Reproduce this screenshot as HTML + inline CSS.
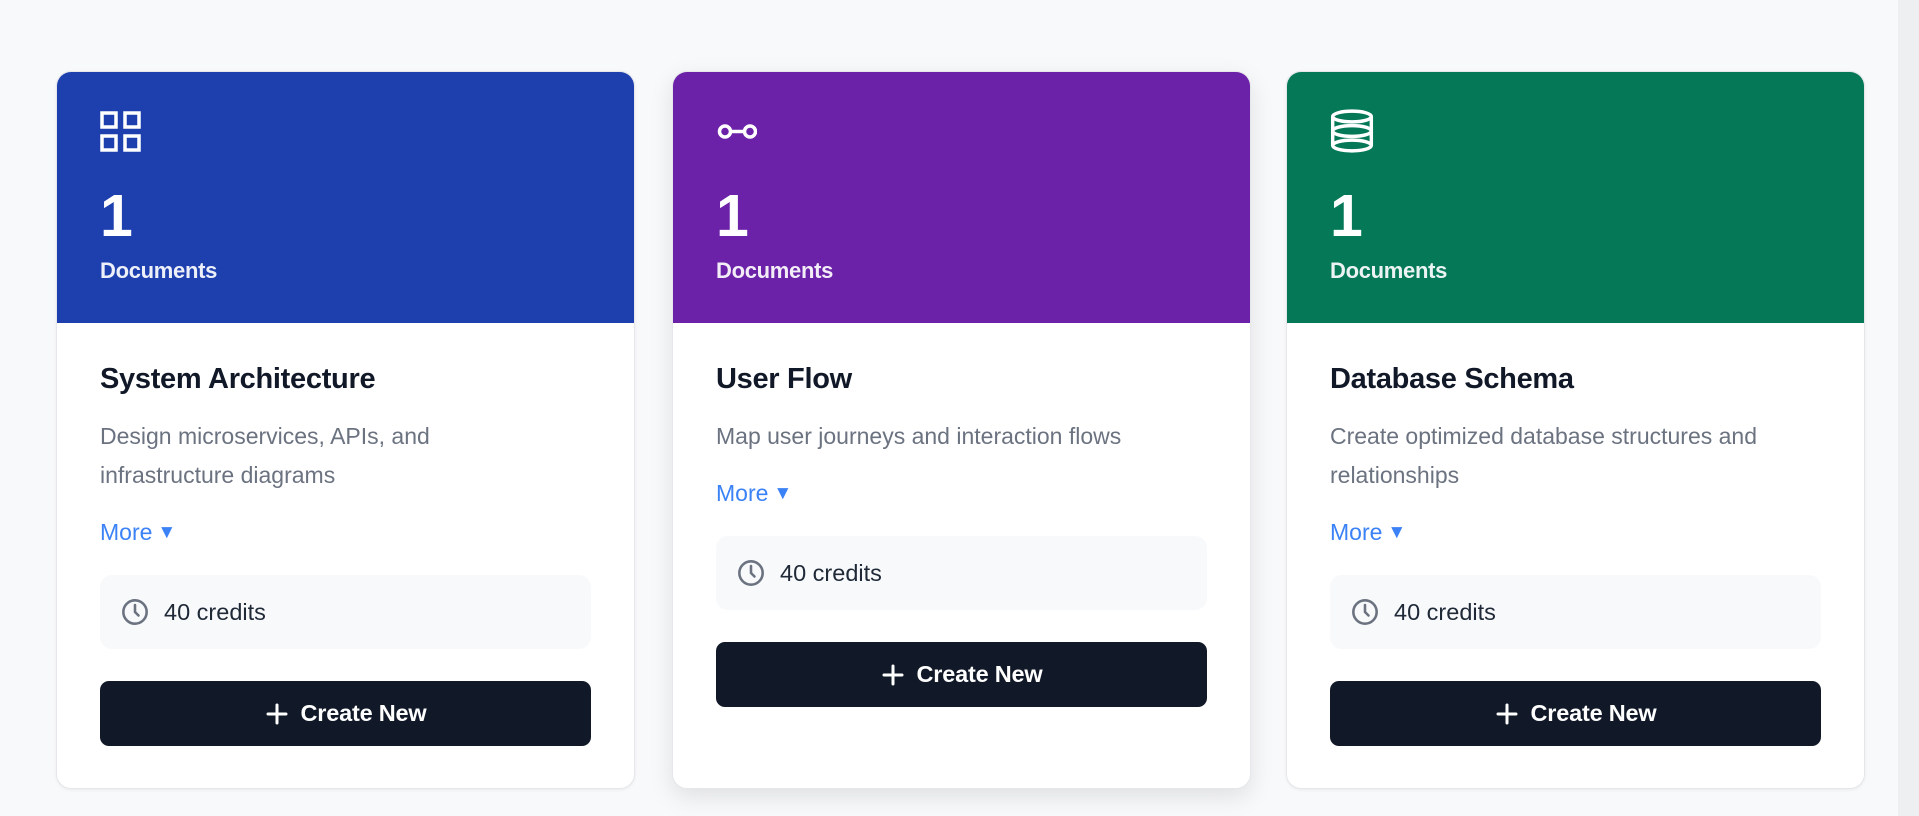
<!DOCTYPE html>
<html><head><meta charset="utf-8"><style>
*{box-sizing:border-box;margin:0;padding:0}
body{width:1919px;height:816px;background:#f8f9fb;font-family:"Liberation Sans",Arial,sans-serif;position:relative;overflow:hidden}
.sb{position:absolute;right:0;top:0;width:21px;height:816px;background:#eeeff1}
.card{position:absolute;top:71px;width:579px;height:718px;background:#fff;border:1px solid #e5e7eb;border-radius:15px;overflow:hidden;box-shadow:0 1px 3px rgba(0,0,0,.06)}
.card.hov{box-shadow:0 8px 24px rgba(0,0,0,.10)}
.hd{height:251px;padding:39px 43px 0;color:#fff}
.hd svg{display:block;width:41px;height:41px}
.num{font-size:59px;font-weight:bold;line-height:59px;margin-top:35px}
.docs{font-size:22px;line-height:30px;margin-top:10px;font-weight:bold;color:rgba(255,255,255,.92);letter-spacing:-.3px}
.bd{padding:38px 43px 0}
h2{font-size:29px;line-height:36px;font-weight:bold;color:#111827;letter-spacing:-.3px}
.desc{font-size:23px;line-height:39px;color:#6b7280;margin-top:20px}
.more{font-size:23px;line-height:34px;color:#3b82f6;margin-top:20px}
.more span{font-size:19px;position:relative;top:-2px;margin-left:5px}
.cred{margin-top:23px;height:74px;background:#f8f9fb;border-radius:12px;display:flex;align-items:center;padding-left:21px;font-size:23.5px;color:#1f2937}
.cred svg{width:28px;height:28px;margin-right:15px}
.btn{margin-top:32px;height:65px;background:#111827;border-radius:9px;color:#fff;display:flex;align-items:center;justify-content:center;font-size:23.5px;font-weight:bold;letter-spacing:-.2px}
.btn svg{width:24px;height:24px;margin-right:12px}
</style></head><body>
<div class="sb"></div>

<div class="card" style="left:56px">
<div class="hd" style="background:#1e40af">
<svg viewBox="0 0 41 41" fill="none" stroke="#fff" stroke-width="3.5"><rect x="2" y="2" width="14" height="14"/><rect x="25" y="2" width="14" height="14"/><rect x="2" y="25" width="14" height="14"/><rect x="25" y="25" width="14" height="14"/></svg>
<div class="num">1</div><div class="docs">Documents</div></div>
<div class="bd"><h2>System Architecture</h2>
<div class="desc">Design microservices, APIs, and<br>infrastructure diagrams</div>
<div class="more">More<span>▼</span></div>
<div class="cred"><svg viewBox="0 0 24 24" fill="none" stroke="#6b7280" stroke-width="2.2" stroke-linecap="round"><circle cx="12" cy="12" r="10"/><path d="M12 6v6l3 3"/></svg>40 credits</div>
<div class="btn"><svg viewBox="0 0 24 24" fill="none" stroke="#fff" stroke-width="3" stroke-linecap="round"><path d="M12 3v18M3 12h18"/></svg>Create New</div>
</div></div>

<div class="card hov" style="left:672px">
<div class="hd" style="background:#6b21a8">
<svg viewBox="0 0 41 41" fill="none" stroke="#fff" stroke-width="3.5"><circle cx="9" cy="20.5" r="5.5"/><circle cx="34" cy="20.5" r="5.5"/><path d="M14.5 20.5h14"/></svg>
<div class="num">1</div><div class="docs">Documents</div></div>
<div class="bd"><h2>User Flow</h2>
<div class="desc">Map user journeys and interaction flows</div>
<div class="more">More<span>▼</span></div>
<div class="cred"><svg viewBox="0 0 24 24" fill="none" stroke="#6b7280" stroke-width="2.2" stroke-linecap="round"><circle cx="12" cy="12" r="10"/><path d="M12 6v6l3 3"/></svg>40 credits</div>
<div class="btn"><svg viewBox="0 0 24 24" fill="none" stroke="#fff" stroke-width="3" stroke-linecap="round"><path d="M12 3v18M3 12h18"/></svg>Create New</div>
</div></div>

<div class="card" style="left:1286px">
<div class="hd" style="background:#047857">
<svg viewBox="0 0 41 41" fill="none" stroke="#fff" stroke-width="3.2" style="width:44px;height:44px;margin-top:-2px"><ellipse cx="20.5" cy="7" rx="18" ry="5"/><ellipse cx="20.5" cy="20.5" rx="18" ry="5"/><ellipse cx="20.5" cy="34" rx="18" ry="5"/><path d="M2.5 7v27M38.5 7v27"/></svg>
<div class="num" style="margin-top:34px">1</div><div class="docs">Documents</div></div>
<div class="bd"><h2>Database Schema</h2>
<div class="desc">Create optimized database structures and<br>relationships</div>
<div class="more">More<span>▼</span></div>
<div class="cred"><svg viewBox="0 0 24 24" fill="none" stroke="#6b7280" stroke-width="2.2" stroke-linecap="round"><circle cx="12" cy="12" r="10"/><path d="M12 6v6l3 3"/></svg>40 credits</div>
<div class="btn"><svg viewBox="0 0 24 24" fill="none" stroke="#fff" stroke-width="3" stroke-linecap="round"><path d="M12 3v18M3 12h18"/></svg>Create New</div>
</div></div>
</body></html>
